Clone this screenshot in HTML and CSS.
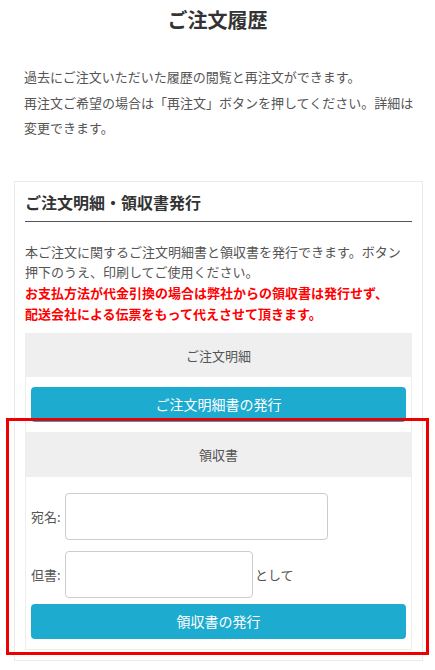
FILE: index.html
```html
<!DOCTYPE html>
<html lang="ja">
<head>
<meta charset="utf-8">
<title>ご注文履歴</title>
<link rel="stylesheet" href="styles.css">
</head>
<body>
  <h1 class="page-title">ご注文履歴</h1>
  <p class="intro">過去にご注文いただいた履歴の閲覧と再注文ができます。<br>再注文ご希望の場合は「再注文」ボタンを押してください。詳細は変更できます。</p>

  <div class="card">
    <h2 class="card-title">ご注文明細・領収書発行</h2>
    <p class="card-text">本ご注文に関するご注文明細書と領収書を発行できます。ボタン押下のうえ、印刷してご使用ください。<br><strong class="warn">お支払方法が代金引換の場合は弊社からの領収書は発行せず、<br>配送会社による伝票をもって代えさせて頂きます。</strong></p>

    <div class="section">
      <div class="section-head">ご注文明細</div>
      <div class="section-body">
        <button class="btn" type="button">ご注文明細書の発行</button>
      </div>
    </div>

    <div class="section section-next">
      <div class="section-head">領収書</div>
      <div class="section-body">
        <div class="field first">
          <label class="field-label" for="atena">宛名:</label>
          <input class="input input-wide" id="atena" type="text">
        </div>
        <div class="field second">
          <label class="field-label" for="tadashi">但書:</label>
          <input class="input input-narrow" id="tadashi" type="text">
          <span class="suffix">として</span>
        </div>
        <button class="btn btn-receipt" type="button">領収書の発行</button>
      </div>
    </div>
  </div>

  <div class="highlight"></div>
</body>
</html>
```

FILE: styles.css
```css
* {
  box-sizing: border-box;
}

body {
  margin: 0;
  width: 435px;
  font-family: "Noto Sans CJK JP", "Noto Sans", sans-serif;
  color: #555;
  background: #fff;
  position: relative;
}

.page-title {
  margin: 6px 0 0;
  font-size: 20px;
  line-height: 28px;
  font-weight: 700;
  text-align: center;
  color: #333;
}

.intro {
  margin: 30px 0 0;
  padding: 0 10px 0 24px;
  font-size: 13px;
  line-height: 25.5px;
  color: #555;
}

.card {
  margin: 40px 12px 0 14px;
  border: 1px solid #ebebeb;
  padding: 8px 10px 10px;
}

.card-title {
  margin: 0;
  font-size: 16px;
  line-height: 24px;
  font-weight: 700;
  color: #333;
  padding-bottom: 7px;
  border-bottom: 1px solid #555;
}

.card-text {
  margin: 20px 0 8px;
  font-size: 13px;
  line-height: 20.8px;
  color: #555;
}

.warn {
  color: #ff0000;
  font-weight: 700;
}

.section {
  border: 1px solid #eee;
}

.section-next {
  border-top: none;
}

.section-head {
  background: #efefef;
  height: 43px;
  display: flex;
  align-items: center;
  justify-content: center;
  font-size: 13px;
  color: #555;
}

.section-next .section-head {
  height: 44px;
}

.section-body {
  padding: 10px 5px;
  display: flex;
  flex-direction: column;
}

.btn {
  display: block;
  width: 100%;
  height: 35px;
  border: none;
  border-radius: 4px;
  background: #1eabd0;
  color: #fff;
  font-family: inherit;
  font-size: 14px;
  padding: 0;
}

.field {
  display: flex;
  align-items: center;
}

.field.first {
  margin-top: 6px;
}

.field.second {
  margin-top: 11px;
}

.field-label {
  width: 34px;
  font-size: 13px;
  color: #555;
}

.input {
  height: 47px;
  border: 1px solid #ccc;
  border-radius: 4px;
  background: #fff;
}

.input-wide {
  width: 263px;
}

.input-narrow {
  width: 188px;
}

.suffix {
  margin-left: 2px;
  font-size: 13px;
  color: #555;
}

.btn-receipt {
  margin-top: 6px;
}

.highlight {
  position: absolute;
  left: 6px;
  top: 418px;
  width: 423px;
  height: 237px;
  border: 3px solid #ee0000;
  pointer-events: none;
}
```
